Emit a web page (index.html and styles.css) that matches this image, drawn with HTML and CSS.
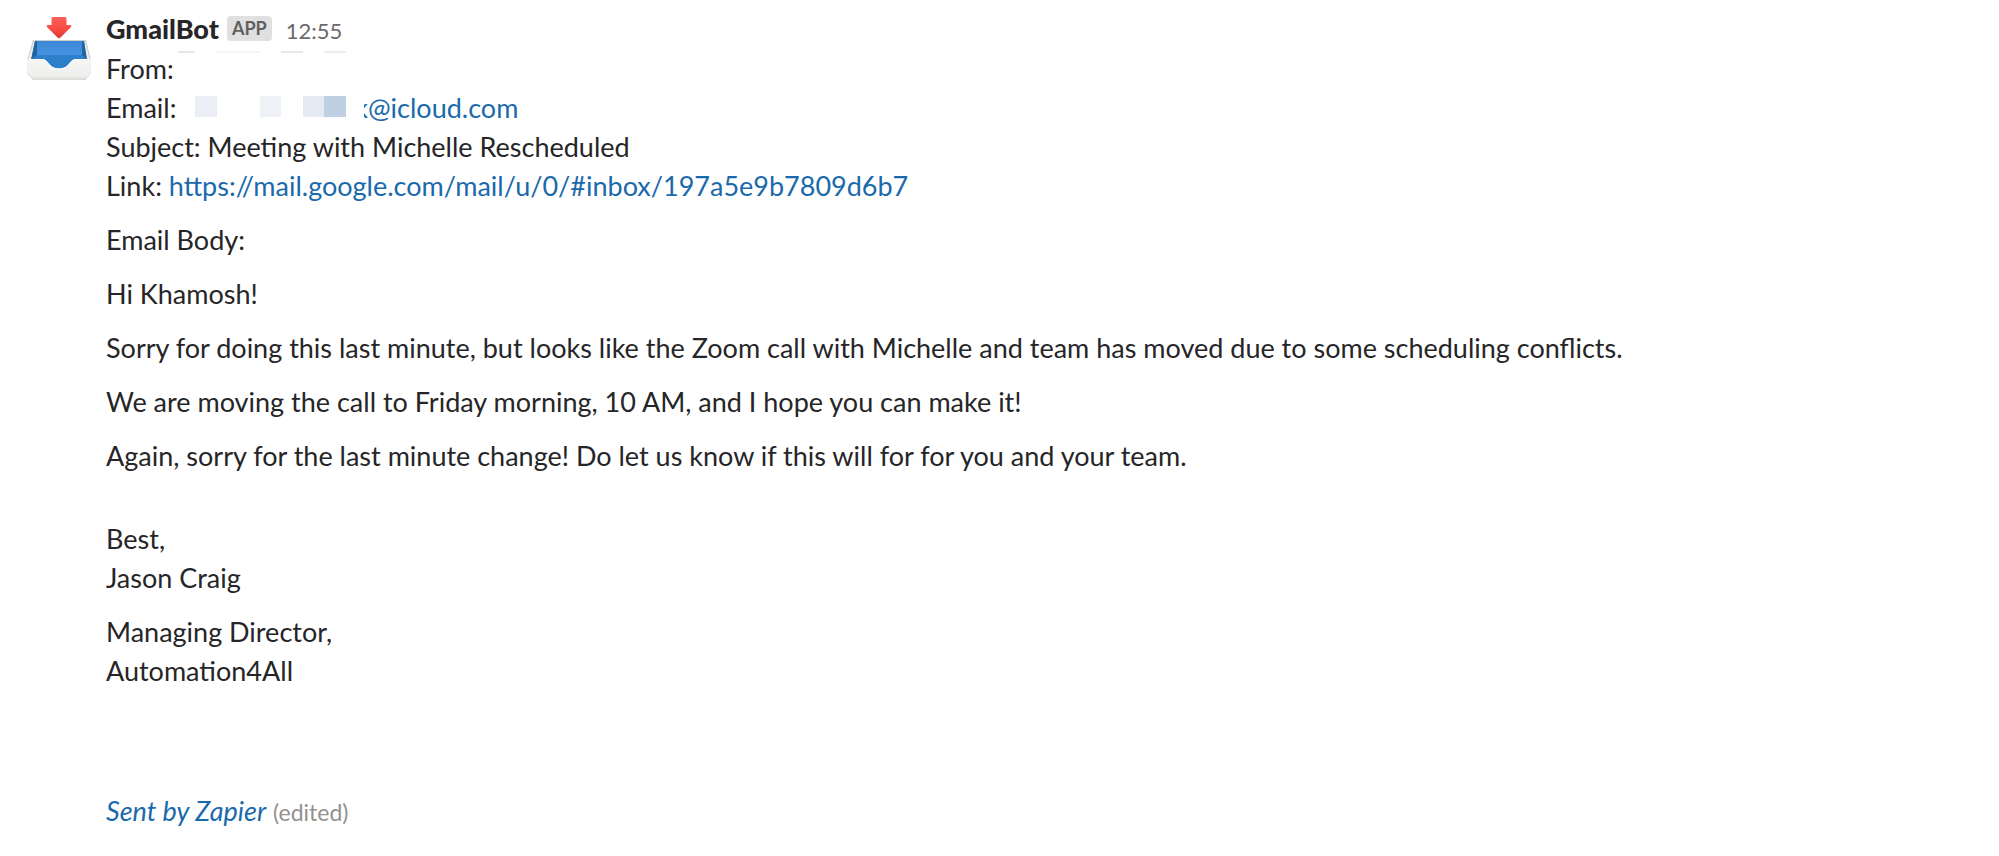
FILE: index.html
```
<!DOCTYPE html>
<html lang="en">
<head>
  <meta charset="UTF-8">
  <title>GmailBot</title>
  <link rel="stylesheet" href="styles.css">
</head>
<body>
  <div class="message">
    <svg class="avatar" viewBox="0 0 66 66" aria-hidden="true">
      <defs>
        <linearGradient id="arrow" x1="0" y1="0" x2="0" y2="1">
          <stop offset="0" stop-color="#f9605a"/>
          <stop offset="0.6" stop-color="#f84a42"/>
          <stop offset="1" stop-color="#d93a35"/>
        </linearGradient>
        <linearGradient id="inside" x1="0" y1="0" x2="0" y2="1">
          <stop offset="0" stop-color="#3c88d6"/>
          <stop offset="1" stop-color="#4f9feb"/>
        </linearGradient>
        <linearGradient id="front" x1="0" y1="0" x2="0" y2="1">
          <stop offset="0" stop-color="#f6f6f5"/>
          <stop offset="0.8" stop-color="#efefed"/>
          <stop offset="1" stop-color="#dcdcda"/>
        </linearGradient>
      </defs>
      <path d="M7 23H60L65 43V56L59 63H7L1 56V43Z" fill="#cfcfcd"/>
      <path d="M8 24H59L64 44V52H2V43Z" fill="#efefed"/>
      <path d="M9 24H58L61 43L44 54H22L5 43Z" fill="url(#inside)"/>
      <path d="M11 38H56L61 43L44 54H22L5 43Z" fill="#2b7fcb"/>
      <path d="M9 24L5 43L11 38V24ZM58 24L61 43L56 38V24Z" fill="#22659f"/>
      <path d="M1 43Q1 42 3 42H16C23 42 22 51.500 33 51.500S43 42 50 42H63Q65 42 65 43V54Q65 56 63 58L60 61Q58 63 55 63H11Q8 63 6 61L3 58Q1 56 1 54Z" fill="url(#front)"/>
      <path d="M3 42.500H16C23 42.500 22 52 33 52S43 42.500 50 42.500H63" fill="none" stroke="#fff"/>
      <path d="M27 0H39Q40.500 0 40.500 1.500V8H44Q46 8 45 10L34.500 20.500Q33 22 31.500 20.500L21 10Q20 8 22 8H25.500V1.500Q25.500 0 27 0Z" fill="url(#arrow)"/>
    </svg>
    <div class="content">
      <div class="header">
        <span class="sender">GmailBot</span>
        <span class="badge">APP</span>
        <time class="time">12:55</time>
      </div>
      <div class="line">
        <span class="label-from">From:</span>
        <svg class="mask mask-thin" width="168" height="2" aria-hidden="true">
          <rect width="17" height="2" fill="#e6e6e6"/>
          <rect x="39" width="43" height="2" fill="#f5f5f5"/>
          <rect x="103" width="22" height="2" fill="#e8e8e8"/>
          <rect x="146" width="22" height="2" fill="#ededed"/>
        </svg>
      </div>
      <div class="line">
        <span class="label-email">Email:</span>
        <svg class="mask" width="151" height="21" aria-hidden="true">
          <rect width="22" height="21" fill="#ebeff5"/>
          <rect x="65" width="21" height="21" fill="#eef2f7"/>
          <rect x="108" width="21" height="21" fill="#e5eaf2"/>
          <rect x="129" width="22" height="21" fill="#bfd0e3"/>
        </svg>
        <a class="address" href="#"><span class="cut">k</span>@icloud.com</a>
      </div>
      <div>Subject: Meeting with Michelle Rescheduled</div>
      <div>Link: <a href="https://mail.google.com/mail/u/0/#inbox/197a5e9b7809d6b7">https://mail.google.com/mail/u/0/#inbox/197a5e9b7809d6b7</a></div>

      <p>Email Body:</p>
      <p>Hi Khamosh!</p>
      <p>Sorry for doing this last minute, but looks like the Zoom call with Michelle and team has moved due to some scheduling conflicts.</p>
      <p>We are moving the call to Friday morning, 10 AM, and I hope you can make it!</p>
      <p>Again, sorry for the last minute change! Do let us know if this will for for you and your team.</p>

      <p class="signature">Best,<br>Jason Craig</p>
      <p>Managing Director,<br>Automation4All</p>

      <p class="footer"><a href="#"><em>Sent by Zapier</em></a> <span class="edited">(edited)</span></p>
    </div>
  </div>
</body>
</html>
```

FILE: styles.css
```
body {
  margin: 0;
  background: #fff;
  color: #262527;
  font-family: Lato, sans-serif;
  font-size: 27px;
  line-height: 39px;
}
a {
  color: #1a6aab;
  text-decoration: none;
}
a:hover {
  text-decoration: underline;
}
p {
  margin: 15px 0 0;
}
.message {
  display: flex;
  align-items: flex-start;
  gap: 14px;
  padding: 9px 26px;
}
.avatar {
  flex: none;
  width: 66px;
  height: 66px;
  margin-top: 8px;
}
.content {
  flex: 1;
  min-width: 0;
}
.header {
  display: flex;
  align-items: baseline;
  height: 40px;
}
.sender {
  font-weight: 900;
}
.badge {
  align-self: flex-start;
  margin: 7px 14px 0 8px;
  padding: 0 5px;
  border-radius: 4px;
  background: #e0e0e0;
  color: #616061;
  font-size: 18px;
  font-weight: 700;
  line-height: 25px;
}
.time {
  color: #6a696a;
  font-size: 22px;
}
.line {
  display: flex;
}
.label-from {
  width: 72px;
}
.label-email {
  width: 89px;
}
.mask {
  flex: none;
  margin-top: 8px;
}
.mask-thin {
  margin-top: 2px;
}
.address {
  display: flex;
  align-items: baseline;
  margin-left: 18px;
}
/* only the tail of the last hidden letter is left showing */
.cut {
  display: flex;
  justify-content: flex-end;
  width: 4px;
  overflow: hidden;
}
.signature {
  margin-top: 44px;
}
.footer {
  margin-top: 101px;
}
.edited {
  color: #919191;
  font-size: 23px;
}
```
